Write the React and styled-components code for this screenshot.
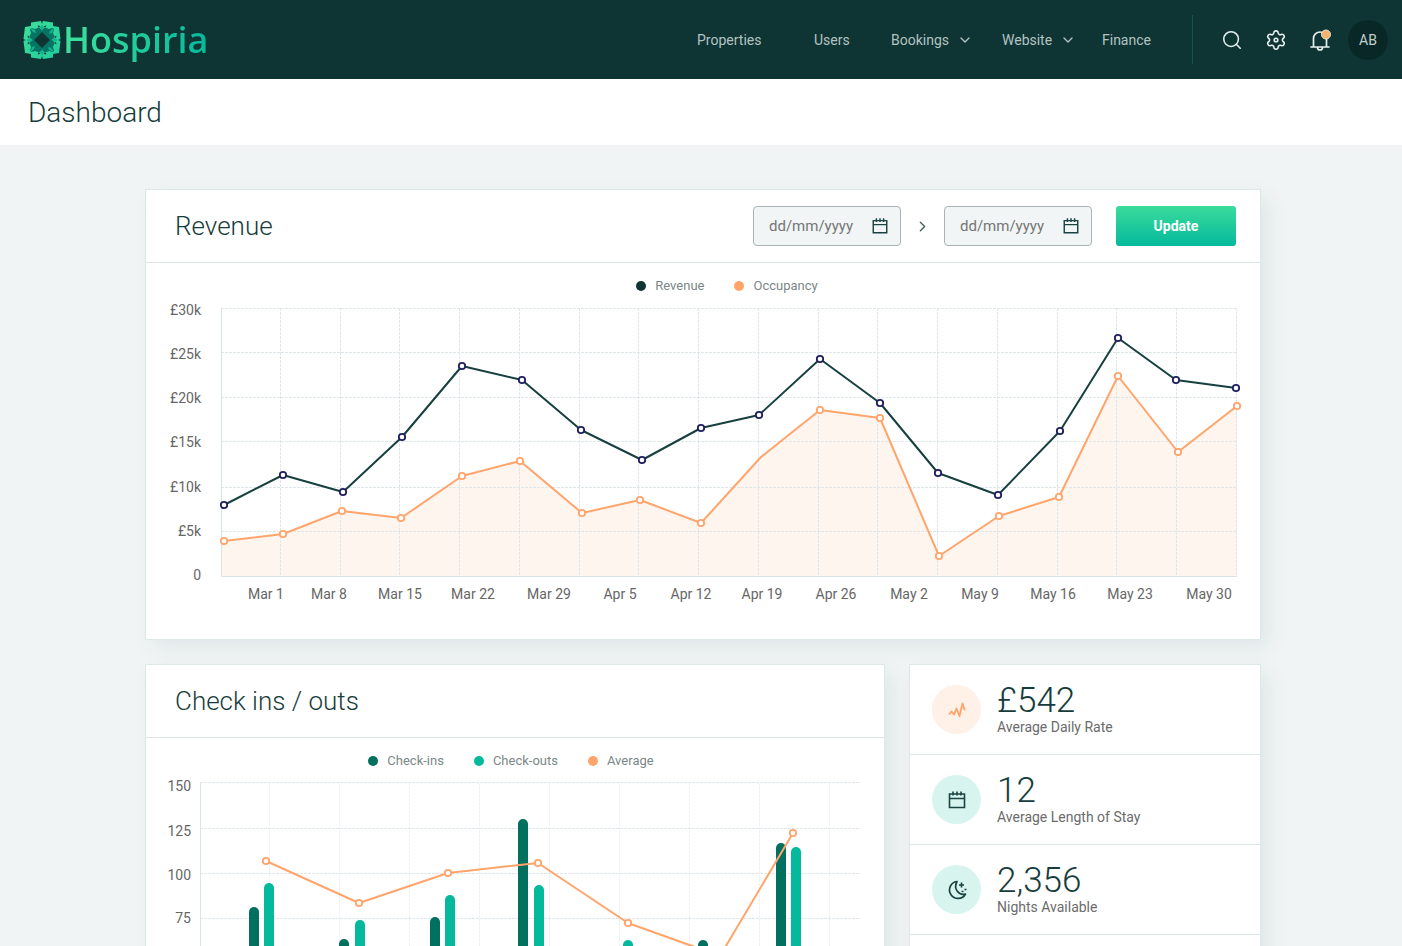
import React from "react";
import styled, { createGlobalStyle } from "styled-components";
// Assets
import { ChevronDown, ChevronRight, Search, Settings } from "lucide-react";

// Data
const navItems = [
  { label: "Properties", width: 117 },
  { label: "Users", width: 77 },
  { label: "Bookings", width: 111, menu: true },
  { label: "Website", width: 100, menu: true },
  { label: "Finance", width: 90 },
];

const revenueLegend = [
  { label: "Revenue", color: "#0e3434" },
  { label: "Occupancy", color: "#ffa46b" },
];

const checkLegend = [
  { label: "Check-ins", color: "#02705f" },
  { label: "Check-outs", color: "#04b99c" },
  { label: "Average", color: "#ffa46b" },
];

const revenue = [
  [3, 197], [62, 167], [122, 184], [181, 129], [241, 58], [301, 72],
  [360, 122], [421, 152], [480, 120], [538, 107], [599, 51], [659, 95],
  [717, 165], [777, 187], [839, 123], [897, 30], [955, 72], [1015, 80],
];

const occupancy = [
  [3, 233], [62, 226], [121, 203], [180, 210], [241, 168], [299, 153],
  [361, 205], [419, 192], [480, 215], [540, 149], [599, 102], [659, 110],
  [718, 248], [778, 208], [838, 189], [897, 68], [957, 144], [1016, 98],
];

const revenueTicks = [
  ["£30k", 2], ["£25k", 46], ["£20k", 90], ["£15k", 134],
  ["£10k", 179], ["£5k", 223], ["0", 267],
];

const weeks = [
  ["Mar 1", 45], ["Mar 8", 108], ["Mar 15", 179], ["Mar 22", 252],
  ["Mar 29", 328], ["Apr 5", 399], ["Apr 12", 470], ["Apr 19", 541],
  ["Apr 26", 615], ["May 2", 688], ["May 9", 759], ["May 16", 832],
  ["May 23", 909], ["May 30", 988],
];

const checkTicks = [["150", 3], ["125", 48], ["100", 92], ["75", 135]];

// [x, top]
const checkIns = [[49, 124], [139, 156], [230, 134], [318, 36], [408, 180], [498, 157], [576, 60]];
const checkOuts = [[64, 100], [155, 137], [245, 112], [334, 102], [423, 157], [513, 180], [591, 64]];
const average = [[66, 78], [159, 120], [248, 90], [338, 80], [428, 140], [520, 173], [593, 50]];

const toPoints = (data) => data.map((p) => p.join(",")).join(" ");

export default function App() {
  return (
    <>
      <GlobalStyle />
      <Header>
        <Brand href="#">
          <Emblem />
          <BrandName>Hospiria</BrandName>
        </Brand>
        <Nav>
          {navItems.map((item) => (
            <NavLink key={item.label} href="#" $width={item.width}>
              {item.label}
              {item.menu && <ChevronDown size={16} />}
            </NavLink>
          ))}
        </Nav>
        <Tools>
          <IconButton aria-label="Search">
            <Search size={22} strokeWidth={1.7} />
          </IconButton>
          <IconButton aria-label="Settings">
            <Gear size={22} strokeWidth={1.7} />
          </IconButton>
          <IconButton aria-label="Notifications">
            <BellIcon />
          </IconButton>
          <Avatar>AB</Avatar>
        </Tools>
      </Header>
      <TitleBar>
        <PageTitle>Dashboard</PageTitle>
      </TitleBar>
      <Main>
        <Card>
          <CardHeader>
            <CardTitle>Revenue</CardTitle>
            <Filters>
              <DateField label="From date" />
              <ChevronRight size={17} />
              <DateField label="To date" />
              <UpdateButton>Update</UpdateButton>
            </Filters>
          </CardHeader>
          <Legend items={revenueLegend} shift={48} />
          <RevenueChart />
        </Card>
        <Columns>
          <Card>
            <CardHeader>
              <CardTitle>Check ins / outs</CardTitle>
            </CardHeader>
            <Legend items={checkLegend} shift={-8} />
            <CheckChart />
          </Card>
          <Card>
            <Stat value="£542" label="Average Daily Rate" tint="#fff0e8">
              <PulseIcon />
            </Stat>
            <Stat value="12" label="Average Length of Stay" tint="#d8f4ef">
              <CalendarIcon size={20} />
            </Stat>
            <Stat value="2,356" label="Nights Available" tint="#d8f4ef">
              <MoonIcon />
            </Stat>
          </Card>
        </Columns>
      </Main>
    </>
  );
}

// Components
function DateField({ label }) {
  return (
    <DateBox>
      <DateInput type="text" placeholder="dd/mm/yyyy" aria-label={label} />
      <CalendarIcon size={18} />
    </DateBox>
  );
}

function Legend({ items, shift }) {
  return (
    <LegendRow $shift={shift}>
      {items.map((item) => (
        <LegendItem key={item.label} $color={item.color}>
          {item.label}
        </LegendItem>
      ))}
    </LegendRow>
  );
}

function Stat({ value, label, tint, children }) {
  return (
    <StatRow>
      <StatIcon $tint={tint}>{children}</StatIcon>
      <div>
        <StatValue>{value}</StatValue>
        <StatLabel>{label}</StatLabel>
      </div>
    </StatRow>
  );
}

function RevenueChart() {
  const columns = Array.from({ length: 17 }, (_, i) => Math.round((i + 1) * 59.75));
  const rows = [0, 44, 89, 133, 179, 223];
  return (
    <Chart viewBox="0 0 1114 331" role="img" aria-label="Revenue and occupancy">
      <g transform="translate(75 0)">
        <polygon points={`0,268 0,233 ${toPoints(occupancy)} 1016,268`} fill="#fff5ef" />
        <GridLines>
          {columns.map((x) => (
            <line key={x} x1={x - 0.5} x2={x - 0.5} y1="0" y2="268" />
          ))}
          {rows.map((y) => (
            <line key={y} x1="0" x2="1016" y1={y + 0.5} y2={y + 0.5} />
          ))}
        </GridLines>
        <Axis d="M0.5 0V268.5H1016" />
        <Line points={toPoints(occupancy)} stroke="#ffa46b" />
        <Line points={toPoints(revenue)} stroke="#16403e" />
        {occupancy
          .filter(([x]) => x !== 540)
          .map(([x, y]) => (
            <Marker key={x} cx={x} cy={y} r="3.2" stroke="#ffa46b" />
          ))}
        {revenue.map(([x, y]) => (
          <Marker key={x} cx={x} cy={y} r="3.2" stroke="#1f1f60" />
        ))}
        {revenueTicks.map(([text, y]) => (
          <Tick key={text} x="-20" y={y + 5} textAnchor="end">
            {text}
          </Tick>
        ))}
        {weeks.map(([text, x]) => (
          <Tick key={text} x={x} y="291" textAnchor="middle">
            {text}
          </Tick>
        ))}
      </g>
    </Chart>
  );
}

function CheckChart() {
  const columns = Array.from({ length: 9 }, (_, i) => 69 + i * 70);
  const rows = [0, 46, 91, 136, 182, 227];
  return (
    <Chart viewBox="0 0 738 320" role="img" aria-label="Check ins and check outs">
      <g transform="translate(54 0)">
        <GridLines $light>
          {columns.map((x) => (
            <line key={x} x1={x + 0.5} x2={x + 0.5} y1="0" y2="273" />
          ))}
        </GridLines>
        <GridLines>
          {rows.map((y) => (
            <line key={y} x1="0" x2="659" y1={y - 0.5} y2={y - 0.5} />
          ))}
        </GridLines>
        <Axis d="M0.5 0V273.5H659" />
        {checkIns.map(([x, y]) => (
          <path key={x} d={`M${x} 273V${y + 5}a5 5 0 0 1 10 0V273z`} fill="#02705f" />
        ))}
        {checkOuts.map(([x, y]) => (
          <path key={x} d={`M${x} 273V${y + 5}a5 5 0 0 1 10 0V273z`} fill="#04b99c" />
        ))}
        <Line points={toPoints(average)} stroke="#ffa46b" />
        {average.map(([x, y]) => (
          <Marker key={x} cx={x} cy={y} r="3.2" stroke="#ffa46b" />
        ))}
        {checkTicks.map(([text, y]) => (
          <Tick key={text} x="-9" y={y + 5} textAnchor="end">
            {text}
          </Tick>
        ))}
      </g>
    </Chart>
  );
}

function Emblem() {
  return (
    <svg width="38" height="38" viewBox="0 0 38 38" aria-hidden="true">
      <defs>
        <linearGradient id="emblem" x1="0" y1="0" x2="1" y2="1">
          <stop offset="0" stopColor="#3fe09a" />
          <stop offset="1" stopColor="#1fcb9c" />
        </linearGradient>
      </defs>
      <path
        fill="url(#emblem)"
        d="M8 1.500 18 0h2l10 1.500V5l6 1 1.500 12v2L36 32l-6 1v3.500L20 38h-2L8 36.500V33l-6-1L.5 20v-2L2 6l6-1z"
      />
      {[0, 90, 180, 270].map((turn) => (
        <g key={turn} transform={`rotate(${turn} 19 19)`}>
          <path fill="#047465" d="M19 9 16 6.500 12 8 8.500 7 7 8.500 8 12 6.500 16 9 19 14 19 19 14z" />
          <path fill="#0e3434" d="M18 0h2l-1 3zM14.500 4.500l2.500.5-1 2zM23.500 4.500l-2.500.5 1 2z" />
          <path fill="#17b58c" d="M19 3.500l2.500 3L19 10l-2.500-3.500z" />
          <path fill="#17b58c" d="M7 7l5 2 1 3-3-1z" />
        </g>
      ))}
      <path fill="#0e3434" d="M19 11l8 8-8 8-8-8z" />
    </svg>
  );
}

function BellIcon() {
  return (
    <svg width="24" height="24" viewBox="0 0 24 24" fill="none" aria-hidden="true">
      <path
        d="M3 19h18M5.500 19V10.500a6.500 6.500 0 0 1 13 0V19M9.500 19.500a2.500 2.500 0 0 0 5 0"
        stroke="#e6efed"
        strokeWidth="1.700"
        strokeLinecap="round"
      />
      <circle cx="18" cy="6.500" r="4.500" fill="#f0b46c" stroke="#f4e3cf" />
    </svg>
  );
}

function CalendarIcon({ size }) {
  return (
    <svg width={size} height={size} viewBox="0 0 20 20" fill="none" aria-hidden="true">
      <path
        d="M2.500 4h15v13.500h-15zM2.500 8.500h15M6 1.500v4M10 1.500v4M14 1.500v4"
        stroke="#1a4342"
        strokeWidth="1.600"
      />
    </svg>
  );
}

function PulseIcon() {
  return (
    <svg width="20" height="20" viewBox="0 0 20 20" fill="none" aria-hidden="true">
      <path
        d="M2.500 14 4.500 11.500 7 14.500 9.500 8.500 12.500 16 15.500 3.500 17.500 9.500"
        stroke="#ffa46b"
        strokeWidth="1.900"
        strokeLinecap="round"
        strokeLinejoin="round"
      />
    </svg>
  );
}

function MoonIcon() {
  return (
    <svg width="22" height="22" viewBox="0 0 22 22" fill="none" aria-hidden="true">
      <path
        d="M11 2.500A8.500 8.500 0 1 0 19.500 15C13 17 7 10 11 2.500z"
        stroke="#1a4342"
        strokeWidth="1.700"
        strokeLinejoin="round"
      />
      <path d="M15.500 3.500v5M13 6h5M18.500 10.500h2M15.500 12.500h2" stroke="#1a4342" strokeWidth="1.600" />
    </svg>
  );
}

// Styles
const GlobalStyle = createGlobalStyle`
  * {
    box-sizing: border-box;
  }
  body {
    margin: 0;
    background: #f0f4f4;
    color: #163d3c;
    font-family: Roboto, "Liberation Sans", sans-serif;
    font-size: 14px;
  }
  button,
  input {
    font-family: inherit;
  }
`;

const Header = styled.header`
  height: 79px;
  padding: 0 14px 0 23px;
  display: flex;
  align-items: center;
  background: #0e3434;
`;

const Brand = styled.a`
  display: flex;
  align-items: center;
  gap: 2px;
  margin-right: auto;
  text-decoration: none;
`;

const BrandName = styled.span`
  font-family: "Open Sans", sans-serif;
  font-size: 36px;
  font-weight: 600;
  line-height: 48px;
  color: transparent;
  background: linear-gradient(90deg, #3fe09a, #04b99c);
  background-clip: text;
`;

const Nav = styled.nav`
  display: flex;
`;

const NavLink = styled.a`
  width: ${(props) => props.$width}px;
  display: flex;
  align-items: center;
  gap: 8px;
  color: #b3c3c1;
  font-size: 14px;
  line-height: 20px;
  text-decoration: none;
`;

const Tools = styled.div`
  height: 49px;
  padding-left: 27px;
  display: flex;
  align-items: center;
  gap: 20px;
  border-left: 1px solid #0b5a50;
`;

const IconButton = styled.button`
  width: 24px;
  height: 24px;
  padding: 0;
  display: flex;
  align-items: center;
  justify-content: center;
  border: 0;
  background: none;
  color: #e6efed;
`;

const Gear = styled(Settings)`
  circle {
    r: 2px;
  }
`;

const Avatar = styled.button`
  width: 40px;
  height: 40px;
  padding: 0;
  margin-left: -4px;
  border: 0;
  border-radius: 50%;
  background: #0a2728;
  color: #c3cfcd;
  font-size: 14px;
`;

const TitleBar = styled.div`
  height: 66px;
  padding: 0 28px;
  display: flex;
  align-items: center;
  background: #fff;
`;

const PageTitle = styled.h1`
  margin: 0;
  font-size: 28px;
  font-weight: 300;
`;

const Main = styled.main`
  padding: 44px 141px 44px 145px;
  display: grid;
  gap: 24px;
`;

const Columns = styled.div`
  display: grid;
  grid-template-columns: minmax(0, 1fr) 352px;
  gap: 24px;
`;

const Card = styled.section`
  background: #fff;
  border: 1px solid #dde7e8;
  box-shadow: 8px 8px 20px rgba(30, 70, 90, 0.07);
`;

const CardHeader = styled.div`
  height: 73px;
  padding: 0 24px 0 29px;
  display: flex;
  align-items: center;
  justify-content: space-between;
  border-bottom: 1px solid #dde5e7;
`;

const CardTitle = styled.h2`
  margin: 0;
  font-size: 26px;
  font-weight: 300;
`;

const Filters = styled.div`
  display: flex;
  align-items: center;
  gap: 13px;
  color: #4b5f5f;
`;

const DateBox = styled.div`
  width: 148px;
  height: 40px;
  padding: 0 11px 0 15px;
  display: flex;
  align-items: center;
  background: #f1f5f5;
  border: 1px solid #a9b3b3;
  border-radius: 4px;
`;

const DateInput = styled.input`
  flex: 1;
  min-width: 0;
  padding: 0;
  border: 0;
  outline: 0;
  background: none;
  color: #163d3c;
  font-size: 15px;
  &::placeholder {
    color: #757575;
  }
`;

const UpdateButton = styled.button`
  width: 120px;
  height: 40px;
  margin-left: 11px;
  border: 0;
  border-radius: 3px;
  background: linear-gradient(#3bdc9b, #04b99c);
  color: #fff;
  font-size: 14px;
  font-weight: 700;
`;

const LegendRow = styled.div`
  height: 45px;
  margin-left: ${(props) => props.$shift}px;
  display: flex;
  align-items: center;
  justify-content: center;
  gap: 30px;
`;

const LegendItem = styled.span`
  display: flex;
  align-items: center;
  gap: 9px;
  color: #7b8888;
  font-size: 13px;
  &::before {
    content: "";
    width: 10px;
    height: 10px;
    border-radius: 50%;
    background: ${(props) => props.$color};
  }
`;

const Chart = styled.svg`
  display: block;
  width: 100%;
  overflow: visible;
`;

const GridLines = styled.g`
  stroke: ${(props) => (props.$light ? "#edf1f2" : "#dfe7ea")};
  stroke-dasharray: 3 1;
`;

const Axis = styled.path`
  fill: none;
  stroke: #d9e2e5;
`;

const Line = styled.polyline`
  fill: none;
  stroke-width: 2px;
  stroke-linejoin: round;
`;

const Marker = styled.circle`
  fill: #fff;
  stroke-width: 1.8px;
`;

const Tick = styled.text`
  fill: #666;
  font-size: 14px;
`;

const StatRow = styled.div`
  height: 90px;
  padding: 0 22px;
  display: flex;
  align-items: center;
  gap: 16px;
  border-bottom: 1px solid #dde7e8;
`;

const StatIcon = styled.div`
  width: 49px;
  height: 49px;
  display: flex;
  align-items: center;
  justify-content: center;
  border-radius: 50%;
  background: ${(props) => props.$tint};
`;

const StatValue = styled.div`
  font-size: 35px;
  font-weight: 300;
  line-height: 34px;
`;

const StatLabel = styled.div`
  color: #6b6b6b;
  font-size: 14px;
  line-height: 18px;
`;
